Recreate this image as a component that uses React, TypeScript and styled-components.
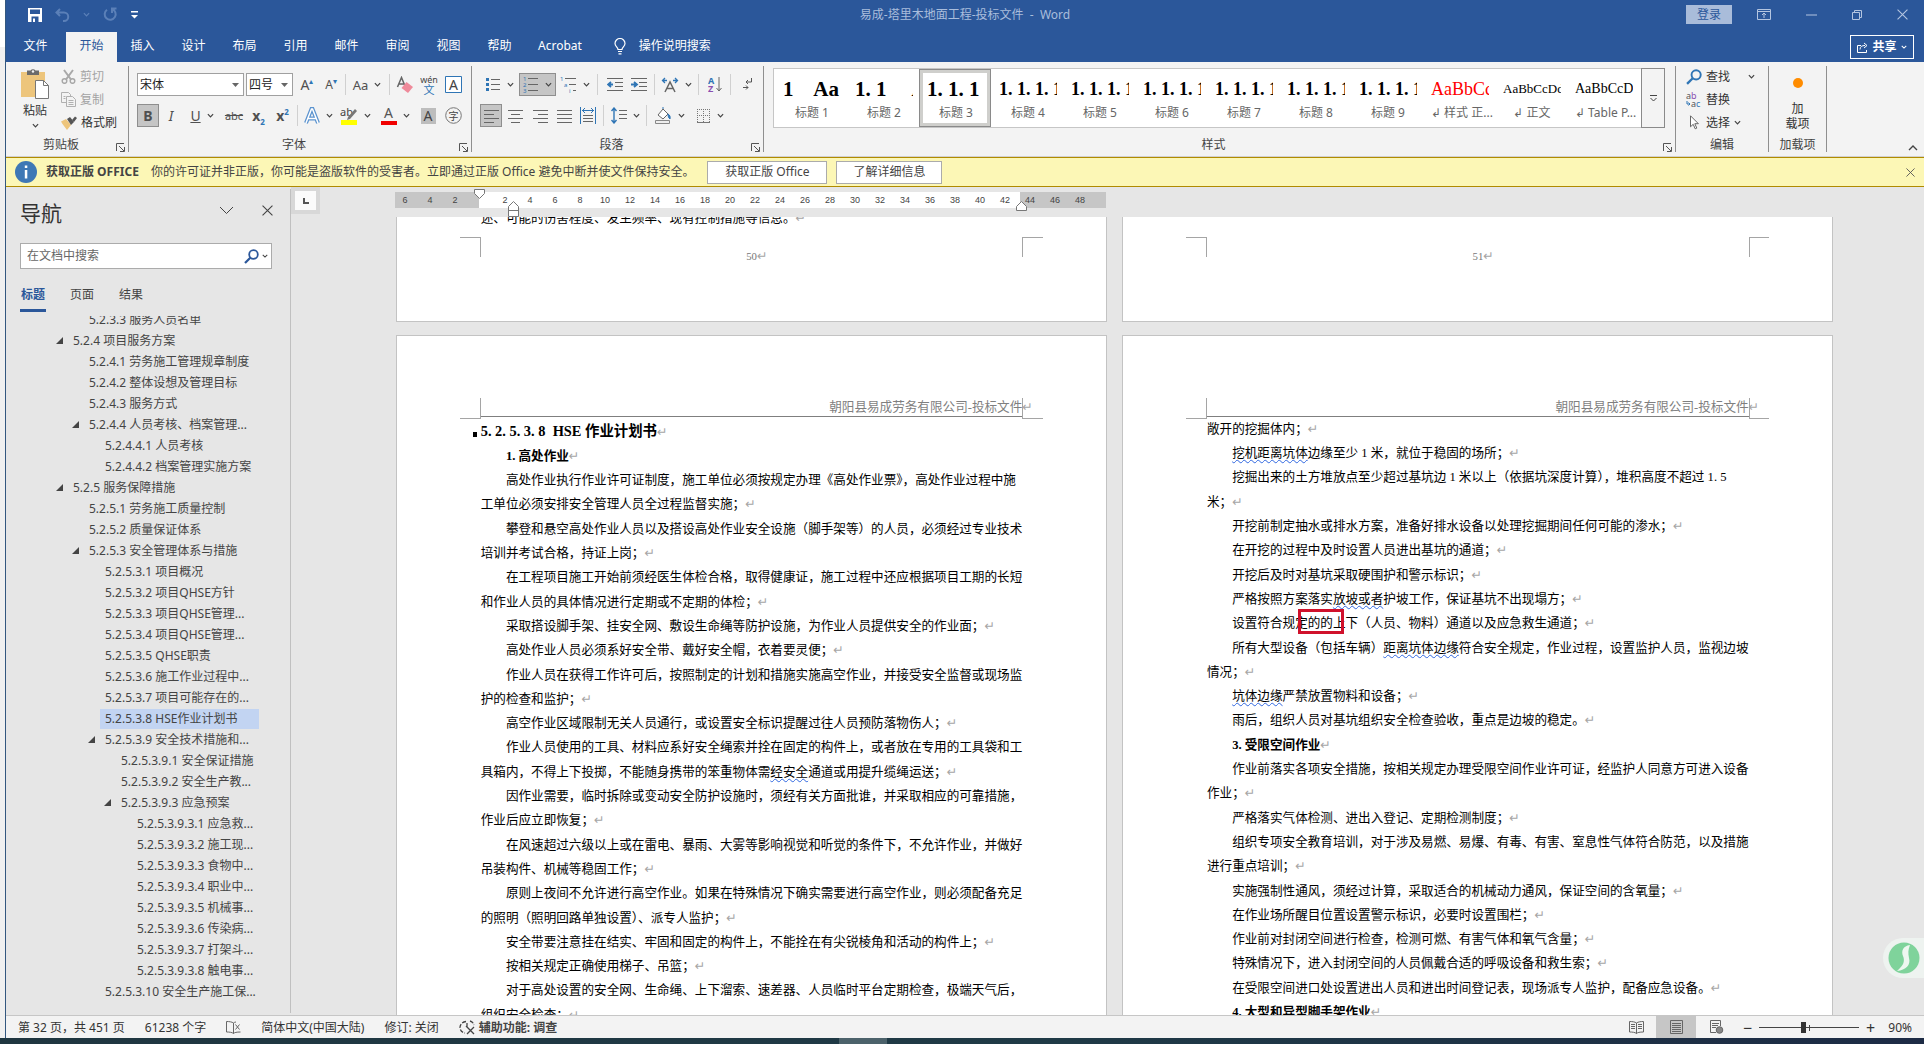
import React, { useState } from "react";
import styled, { createGlobalStyle, css } from "styled-components";

const ui = '"Noto Sans", "Noto Sans CJK SC", sans-serif';
const song = '"Liberation Serif", "Noto Sans CJK SC", serif';

const Global = createGlobalStyle`
  *, *::before, *::after { box-sizing: border-box; }
  body { margin: 0; font-family: ${ui}; font-size: 12px; line-height: 16px; color: #333; background: #f0f0f0; }
  button, input, select { font: inherit; color: inherit; margin: 0; padding: 0; border: 0; background: none; border-radius: 0; }
  button { cursor: pointer; }
  a { color: inherit; text-decoration: none; }
  svg { display: block; flex: none; }
  p, h1, h2, h3 { margin: 0; font: inherit; }
`;

/* ---------- shell ---------- */
const Shell = styled.div`
  height: 100vh;
  display: grid;
  grid-template-rows: minmax(0, 1fr) 6px;
  overflow: hidden;
`;
const Desktop = styled.div`
  display: grid;
  grid-template-columns: 5px minmax(0, 1fr);
  min-height: 0;
  background: linear-gradient(#fff 47px, #f0f0f0 47px);
`;
const Win = styled.div`
  grid-column: 2;
  display: flex;
  flex-direction: column;
  min-height: 0;
  border-left: 1px solid #33577f;
  background: #e6e6e6;
`;
const Taskbar = styled.div`
  display: flex;
  background: linear-gradient(to right, #1f3640, #1f3a46 55%, #1d2b45);
`;
const TaskItem = styled.div`
  width: 48px;
  margin-left: 839px;
  background: #4c626b;
`;

/* ---------- title ---------- */
const Blue = styled.header`
  background: #2b579a;
  color: #fff;
`;
const TitleBar = styled.div`
  display: grid;
  grid-template-columns: 1fr auto 1fr;
  align-items: center;
  height: 32px;
  padding-bottom: 3px;
`;
const Quick = styled.div`
  display: flex;
  align-items: center;
  padding-left: 22px;
  gap: 13px;
`;
const DocTitle = styled.h1`
  color: #a9bddc;
  white-space: pre;
`;
const WinTools = styled.div`
  display: flex;
  align-items: center;
  justify-content: flex-end;
  color: #b4c5e0;
  padding-right: 16px;
  gap: 35px;
`;
const Login = styled.button`
  height: 19px;
  width: 46px;
  margin-right: -10px;
  background: #a9bcda;
  color: #2b579a;
`;
const TabRow = styled.nav`
  display: flex;
  height: 30px;
  padding-left: 4px;
`;
const RibbonTab = styled.button<{ $on?: boolean }>`
  min-width: 51px;
  padding: 0 13px 2px;
  color: ${(p) => (p.$on ? "#2b579a" : "#fff")};
  background: ${(p) => (p.$on ? "#f3f3f3" : "transparent")};
  &:first-child { margin-right: 5px; }
`;
const Tell = styled.button`
  display: flex;
  align-items: center;
  gap: 13px;
  padding: 0 19px 2px;
`;
const Share = styled.button`
  display: flex;
  align-items: center;
  justify-content: center;
  gap: 4px;
  width: 64px;
  height: 24px;
  margin: 3px 10px 0 auto;
  border: 1px solid #fff;
  font-weight: 700;
`;

/* ---------- ribbon ---------- */
const Ribbon = styled.div`
  display: flex;
  height: 95px;
  padding: 4px 0;
  background: #f3f3f3;
  border-bottom: 1px solid #d2d0ce;
  color: #333;
`;
const Group = styled.section<{ $w?: number }>`
  display: flex;
  flex-direction: column;
  ${(p) => (p.$w ? css`flex: none; width: ${p.$w}px;` : css`flex: 1; min-width: 0;`)}
  border-right: 1px solid #8f8f8f;
`;
const Tools = styled.div`
  display: flex;
  flex-direction: column;
  gap: 8px;
  padding: 7px 0 0 8px;
`;
const ToolRow = styled.div`
  display: flex;
  align-items: center;
  height: 23px;
`;
const Foot = styled.div`
  display: flex;
  align-items: flex-end;
  margin-top: auto;
  line-height: 14px;
  white-space: nowrap;
  color: #444;
  span { flex: 1; text-align: center; }
  svg { margin-right: 3px; }
`;
const Tool = styled.button<{ $w: number; $on?: boolean }>`
  display: flex;
  align-items: center;
  justify-content: center;
  gap: 6px;
  flex: none;
  width: ${(p) => p.$w}px;
  height: 23px;
  color: #555;
  ${(p) => p.$on && css`background: #c5c5c5; box-shadow: inset 0 0 0 1px #8e8e8e;`}
`;
const Sep = styled.span<{ $w: number }>`
  flex: none;
  width: 1px;
  height: 21px;
  margin: 0 ${(p) => Math.floor(p.$w / 2)}px;
  background: #d0d0d0;
`;
const Field = styled.label<{ $w: number }>`
  display: flex;
  align-items: center;
  width: ${(p) => p.$w}px;
  height: 23px;
  margin-right: 2px;
  padding-right: 4px;
  border: 1px solid #a0a0a0;
  background: #fff;
  select { appearance: none; flex: 1; min-width: 0; padding-left: 2px; color: #222; outline: 0; }
`;
const Glyph = styled.span<{ $size?: number; $bold?: boolean; $italic?: boolean; $line?: string; $color?: string }>`
  font-size: ${(p) => p.$size ?? 14}px;
  font-weight: ${(p) => (p.$bold ? 700 : 400)};
  font-style: ${(p) => (p.$italic ? "italic" : "normal")};
  text-decoration: ${(p) => p.$line ?? "none"};
  color: ${(p) => p.$color ?? "#505050"};
  sup, sub { font-size: 8px; line-height: 0; color: #2f75b5; }
`;
const Bar = styled.span<{ $c: string }>`
  display: block;
  width: 16px;
  height: 19px;
  line-height: 14px;
  font-size: 14px;
  border-bottom: 4px solid ${(p) => p.$c};
`;
const Shaded = styled.span`
  width: 15px;
  background: #bdbdbd;
  color: #444;
  font-size: 14px;
`;
const Clip = styled.div`
  display: grid;
  grid-template-columns: 44px 1fr;
  gap: 4px;
  padding: 0 0 0 7px;
`;
const Paste = styled.button`
  display: flex;
  flex-direction: column;
  align-items: center;
  padding-top: 2px;
  gap: 3px;
`;
const Stack = styled.div<{ $inset?: boolean }>`
  display: flex;
  flex-direction: column;
  padding-left: ${(p) => (p.$inset ? "10px" : 0)};
`;
const Cmd = styled.button<{ $off?: boolean }>`
  display: flex;
  align-items: center;
  gap: 4px;
  height: 23px;
  color: ${(p) => (p.$off ? "#a3a3a3" : "#333")};
  padding-bottom: 2px;
  white-space: nowrap;
`;
const Gallery = styled.div`
  display: flex;
  height: 60px;
  margin: 2px 10px 0 9px;
  border: 1px solid #c6c6c6;
  background: #fff;
`;
const Styles = styled.div`
  display: flex;
  flex: 1;
  min-width: 0;
  overflow: hidden;
  padding-left: 1px;
`;
const StyleCard = styled.button<{ $on?: boolean }>`
  display: flex;
  flex-direction: column;
  flex: none;
  width: 72px;
  height: 58px;
  padding: 7px 6px 0 8px;
  text-align: center;
  ${(p) => p.$on && css`box-shadow: inset 0 0 0 1px #8a8a8a, inset 0 0 0 4px #cfcfcc;`}
`;
const Sample = styled.span<{ $size: number; $bold?: boolean; $color?: string }>`
  width: 100%;
  height: 26px;
  overflow: hidden;
  white-space: pre;
  text-align: left;
  font-family: ${song};
  font-size: ${(p) => p.$size}px;
  line-height: 26px;
  font-weight: ${(p) => (p.$bold ? 700 : 400)};
  color: ${(p) => p.$color ?? "#000"};
`;
const StyleName = styled.span`
  width: 100%;
  color: #666;
  white-space: nowrap;
  line-height: 22px;
`;
const More = styled.button`
  display: grid;
  place-items: center;
  width: 24px;
  margin: -1px;
  border: 1px solid #8a8a8a;
  background: #f3f3f3;
`;
const AddIn = styled.button`
  display: flex;
  flex-direction: column;
  align-items: center;
  padding-top: 11px;
  line-height: 15px;
  svg { margin-bottom: 12px; }
`;
const Tail = styled.div`
  display: flex;
  align-items: flex-end;
  justify-content: flex-end;
  width: 97px;
  padding: 0 6px 0 0;
`;

/* ---------- licence notice ---------- */
const Notice = styled.div`
  display: flex;
  align-items: center;
  height: 30px;
  padding: 0 9px;
  background: #fcf7b6;
  border: solid #b08b00;
  border-width: 1px 0;
  color: #444;
  strong { margin: 0 12px 0 9px; }
`;
const NoticeButton = styled.button<{ $w: number }>`
  width: ${(p) => p.$w}px;
  height: 23px;
  margin-left: 9px;
  border: 1px solid #ababab;
  background: #fff;
  span + & { margin-left: 13px; }
`;
const Spacer = styled.span`
  flex: 1;
`;

/* ---------- body ---------- */
const Body = styled.div`
  position: relative;
  display: grid;
  grid-template-columns: 285px minmax(0, 1fr);
  flex: 1;
  min-height: 0;
`;
const Pane = styled.aside`
  display: flex;
  flex-direction: column;
  min-height: 0;
  padding: 8px 0 0 14px;
  margin: 2px 0;
  border-right: 1px solid #c0c0c0;
`;
const PaneHead = styled.div`
  display: flex;
  align-items: center;
  height: 30px;
  padding: 0 17px 4px 0;
  gap: 28px;
  h2 { flex: 1; font-size: 21px; line-height: 30px; color: #333; padding-top: 6px; }
`;
const Search = styled.form`
  display: flex;
  align-items: center;
  width: 252px;
  height: 26px;
  margin-top: 16px;
  padding: 0 3px 0 6px;
  gap: 3px;
  border: 1px solid #ababab;
  background: #fff;
  input { flex: 1; min-width: 0; outline: 0; }
  input::placeholder { color: #666; opacity: 1; }
`;
const PaneTabs = styled.div`
  display: flex;
  gap: 23px;
  margin-top: 13px;
`;
const PaneTab = styled.button<{ $on?: boolean }>`
  width: 26px;
  height: 30px;
  padding-bottom: 2px;
  color: ${(p) => (p.$on ? "#2b579a" : "#444")};
  font-weight: ${(p) => (p.$on ? 700 : 400)};
  border-bottom: 3px solid ${(p) => (p.$on ? "#2b579a" : "transparent")};
  white-space: nowrap;
`;
const Outline = styled.ul`
  flex: 1;
  min-height: 0;
  overflow: hidden;
  list-style: none;
  margin: 4px 0 0;
  padding: 0;
  li:first-child { margin-top: -7px; }
`;
const Entry = styled.li<{ $depth: number }>`
  display: flex;
  align-items: center;
  height: 21px;
  padding-left: ${(p) => 31 + p.$depth * 16}px;
`;
const Arrow = styled.span`
  display: grid;
  place-items: center;
  width: 17px;
  flex: none;
`;
const EntryLink = styled.a<{ $on?: boolean }>`
  white-space: nowrap;
  line-height: 20px;
  padding: 0 5px;
  width: ${(p) => (p.$on ? "159px" : "auto")};
  color: #444;
  background: ${(p) => (p.$on ? "#c2d4f2" : "none")};
`;
const Work = styled.main`
  display: flex;
  flex-direction: column;
  min-width: 0;
  min-height: 0;
  overflow: hidden;
`;
const RulerRow = styled.div`
  display: flex;
  height: 30px;
  flex: none;
`;
const TabStop = styled.button`
  display: grid;
  place-items: center;
  width: 29px;
  height: 27px;
  border: 4px solid #d8d8d8;
  background: #fbfbfb;
`;
const Ruler = styled.div`
  position: relative;
  display: grid;
  grid-template-columns: repeat(28, 25px);
  align-items: center;
  width: 711px;
  height: 16px;
  margin: 5px 0 0 75px;
  background: linear-gradient(to right, #c6c6c6 84px, #fff 84px, #fff 625px, #c6c6c6 625px);
  font: 9px/16px "Liberation Sans", sans-serif;
  color: #444;
  text-align: center;
  span { width: 20px; }
`;
const Marker = styled.svg<{ $x: number; $y: number }>`
  position: absolute;
  left: ${(p) => p.$x}px;
  top: ${(p) => p.$y}px;
`;
const Scroll = styled.div`
  flex: 1;
  min-height: 0;
  overflow: hidden;
  padding-left: 105px;
`;
const Sheets = styled.div`
  display: grid;
  grid-template-columns: 790px 790px;
  column-gap: 17px;
  row-gap: 14px;
`;
const Sheet = styled.article<{ $tail?: boolean }>`
  height: ${(p) => (p.$tail ? "117px" : "1117px")};
  background: #fff;
  border: 1px solid #c3c3c3;
  border-top-width: ${(p) => (p.$tail ? 0 : "1px")};
  overflow: hidden;
  font-family: ${song};
  font-size: 14px;
  color: #000;
`;
const LastLine = styled.p`
  height: 27px;
  line-height: 27px;
  margin: -12px 0 7px 93px;
`;
const MarginRow = styled.div<{ $head?: boolean }>`
  display: flex;
  height: 23px;
  margin-top: ${(p) => (p.$head ? "69px" : 0)};
  padding: 0 70px;
`;
const Corner = styled.i<{ $edge: "tl" | "tr" | "bl" | "br" }>`
  width: 23px;
  height: 23px;
  flex: none;
  border: 0 solid #a5a5a5;
  border-${(p) => (p.$edge[0] === "t" ? "top" : "bottom")}-width: 1px;
  border-${(p) => (p.$edge[1] === "l" ? "right" : "left")}-width: 1px;
`;
const PageNumber = styled.span`
  flex: 1;
  padding: 14px 0 0 12px;
  text-align: center;
  font-size: 12px;
  line-height: 16px;
  color: #777;
`;
const HeadText = styled.span`
  flex: 1;
  height: 21px;
  line-height: 20px;
  text-align: right;
  color: #7f7f7f;
  border-bottom: 1px solid #7f7f7f;
  white-space: nowrap;
`;
const HeadMark = styled.span`
  display: inline-block;
  width: 0;
`;
const Flow = styled.div<{ $up?: boolean }>`
  width: 604px;
  margin-left: 93px;
  margin-top: ${(p) => (p.$up ? "-2px" : 0)};
  line-height: 27px;
`;
const Title3 = styled.h3`
  position: relative;
  height: 28px;
  font-size: 16px;
  font-weight: 700;
  white-space: pre;
  &::before {
    content: "";
    position: absolute;
    left: -9px;
    top: 15px;
    width: 5px;
    height: 5px;
    background: #000;
  }
`;
const Para = styled.p<{ $bold?: boolean; $flat?: boolean }>`
  text-indent: ${(p) => (p.$flat ? 0 : "2em")};
  font-weight: ${(p) => (p.$bold ? 700 : 400)};
`;
const MarkText = styled.span`
  font: 400 14px/0 "DejaVu Sans", sans-serif;
  color: #a6a6a6;
  text-indent: 0;
`;
const Wavy = styled.span`
  text-decoration: underline wavy #2f67e0 1px;
  text-underline-offset: 2px;
`;
const Boxed = styled.span`
  position: relative;
  text-indent: 0;
  &::after {
    content: "";
    position: absolute;
    inset: -8px 2px -4px 3px;
    border: 4px solid #d0112b;
  }
`;
const Float = styled.button`
  position: absolute;
  right: 0;
  bottom: 37px;
  display: grid;
  place-items: center;
  width: 41px;
  height: 40px;
  border-radius: 20px 0 0 20px;
  background: #eef3f0;
`;

/* ---------- status ---------- */
const Status = styled.footer`
  display: flex;
  align-items: center;
  height: 23px;
  flex: none;
  padding: 1px 12px 0;
  border-top: 1px solid #c6c6c6;
  background: #f3f3f3;
  color: #333;
  gap: 20px;
  white-space: nowrap;
`;
const Access = styled.button`
  display: flex;
  align-items: center;
  gap: 3px;
  font-weight: 700;
  color: #444;
`;
const Views = styled.div`
  display: flex;
  align-self: stretch;
  margin: -1px 0 0 auto;
`;
const View = styled.button<{ $on?: boolean }>`
  display: grid;
  place-items: center;
  width: 40px;
  background: ${(p) => (p.$on ? "#c6c6c6" : "none")};
`;
const ZoomBox = styled.div`
  display: flex;
  align-items: center;
  gap: 4px;
  margin-left: -16px;
  span { width: 30px; text-align: right; }
`;
const Step = styled.button`
  width: 15px;
  font-size: 16px;
`;
const Track = styled.input`
  appearance: none;
  width: 100px;
  height: 12px;
  background: linear-gradient(#444, #444) center / 100% 1px no-repeat, linear-gradient(#444, #444) center / 1px 6px no-repeat;
  &::-webkit-slider-thumb {
    appearance: none;
    width: 5px;
    height: 11px;
    background: #333;
  }
`;

/* ---------- drawings ---------- */
const Chev = ({ c = "#444", w = 7 }: { c?: string; w?: number }) => (
  <svg width={w} height={w} viewBox="0 0 8 8" fill="none" stroke={c} strokeWidth="1.4"><path d="M1 2.5 4 5.5 7 2.5" /></svg>
);
const Tri = () => <svg width="7" height="4" viewBox="0 0 7 4"><path d="M0 0h7L3.500 4z" fill="#666" /></svg>;
const Cross = ({ s = 10, c = "currentColor" }: { s?: number; c?: string }) => (
  <svg width={s} height={s} viewBox="0 0 10 10" stroke={c} strokeWidth="1"><path d="M.5.5l9 9M9.500.5l-9 9" /></svg>
);
const Launcher = () => (
  <svg width="9" height="9" viewBox="0 0 9 9" fill="none" stroke="#555"><path d="M.5 8V.5H8M3 3l5 5M8.500 4v4.500H4" /></svg>
);
const Magnifier = ({ c = "#2b579a", s = 15 }: { c?: string; s?: number }) => (
  <svg width={s} height={s} viewBox="0 0 15 15" fill="none" stroke={c}><circle cx="9.500" cy="5.500" r="4.300" strokeWidth="1.800" /><path d="M6.300 8.700 1 14" strokeWidth="2.200" /></svg>
);
const Lines = ({ d, w = 15 }: { d: string; w?: number }) => (
  <svg width={w} height="14" viewBox={`0 0 ${w} 14`} stroke="#666" fill="none"><path d={d} /></svg>
);
const Save = () => (
  <svg width="14" height="14" viewBox="0 0 14 14"><path d="M0 0h14v14H0z" fill="#fff" /><path d="M2 1.500h10v4.500H2zM3.500 8.500h7V14h-7z" fill="#2b579a" /><path d="M5 10.500h2V14H5z" fill="#fff" /></svg>
);
const Undo = () => (
  <svg width="15" height="14" viewBox="0 0 15 14" fill="none" stroke="#5b80b8" strokeWidth="2"><path d="M5 1 1.500 4.500 5 8M2 4.500h7a4 4 0 0 1 0 8.500H8" /></svg>
);
const Redo = () => (
  <svg width="15" height="15" viewBox="0 0 15 15" fill="none" stroke="#5b80b8" strokeWidth="2"><path d="M9 2a5.500 5.500 0 1 1-5 .7M9 6V1.500h4.500" /></svg>
);
const Bulb = () => (
  <svg width="12" height="17" viewBox="0 0 12 17" fill="none" stroke="#fff" strokeWidth="1.200"><path d="M4 11.500C4 9 1 8.500 1 5.500a5 5 0 0 1 10 0c0 3-3 3.500-3 6zM4 13.500h4M4.500 15.800h3" /></svg>
);
const PasteIcon = () => (
  <svg width="30" height="32" viewBox="0 0 30 32"><path d="M1 4h24v25H1z" fill="#edc57c" /><path d="M7 2.500h3.500a3 3 0 0 1 5 0H19V7H7z" fill="#6b6b6b" /><circle cx="13" cy="3.500" r="1.200" fill="#f3f3f3" /><path d="M15.500 12.500h8l5 5v13h-13z" fill="#fff" stroke="#777" /><path d="M23.500 12.500v5h5" fill="none" stroke="#777" /></svg>
);
const Scissors = () => (
  <svg width="15" height="15" viewBox="0 0 15 15" fill="none" stroke="#a8a8a8" strokeWidth="1.500"><path d="M3 1l7 9.500M12 1 5 10.500" strokeWidth="2" /><circle cx="3.500" cy="12" r="2.300" /><circle cx="11.500" cy="12" r="2.300" /></svg>
);
const CopyIcon = () => (
  <svg width="15" height="15" viewBox="0 0 15 15" fill="#f3f3f3" stroke="#b0b0b0"><path d="M.5.5h7l2 2v8h-9z" /><path d="M5.500 4.500h6l3 3v7h-9zM7.500 8.500h5M7.500 10.500h5M7.500 12.500h5M2.500 4.500h2M2.500 6.500h2" /></svg>
);
const Brush = () => (
  <svg width="16" height="14" viewBox="0 0 16 14"><path d="M0 5.500 5 3l5 6-4 5C4 11 2 9 0 5.500z" fill="#edc57c" /><path d="M6 3l3-2 4 5-3 3z" fill="#555" /><path d="M11 4l3-3.500L16 2l-3 4z" fill="#555" /></svg>
);
const Eraser = () => (
  <svg width="18" height="18" viewBox="0 0 18 18"><path d="M1.500 11 5.500 1.500 9 10M3 8h5" fill="none" stroke="#666" strokeWidth="1.500" /><path d="M10.500 6 17 11l-5 6-6.500-5z" fill="#ef8a9a" /></svg>
);
const Wen = () => (
  <svg width="18" height="20" viewBox="0 0 18 20"><text x="9" y="8" textAnchor="middle" fontFamily="Noto Sans" fontSize="9" fill="#444">wén</text><text x="9" y="19" textAnchor="middle" fontFamily="Noto Sans CJK SC" fontSize="11" fill="#2f75b5">文</text></svg>
);
const LetterBox = () => (
  <svg width="17" height="17" viewBox="0 0 17 17"><path d="M.5.5h16v16H.5z" fill="#fff" stroke="#2f75b5" /><text x="8.500" y="14" textAnchor="middle" fontFamily="Noto Sans" fontSize="14" fill="#444">A</text></svg>
);
const RingChar = () => (
  <svg width="17" height="17" viewBox="0 0 17 17"><circle cx="8.500" cy="8.500" r="7.800" fill="none" stroke="#777" /><text x="8.500" y="12.500" textAnchor="middle" fontFamily="Noto Sans CJK SC" fontSize="10" fill="#444">字</text></svg>
);
const Outlined = () => (
  <svg width="16" height="18" viewBox="0 0 16 18"><path d="M2 16 7.500 2h1L14 16M4 11.500h8" fill="none" stroke="#5b93cf" strokeWidth="4" /><path d="M2 16 7.500 2h1L14 16M4 11.500h8" fill="none" stroke="#fff" strokeWidth="1.500" /></svg>
);
const Highlighter = () => (
  <svg width="18" height="19" viewBox="0 0 18 19"><text x="0" y="10" fontFamily="Noto Sans" fontSize="11" fill="#444">ab</text><path d="M15 3l2 2-7 8-3 1 1-3z" fill="#777" /><path d="M1 14h16v5H1z" fill="#ff0" /></svg>
);
const BulletsIcon = () => (
  <svg width="15" height="15" viewBox="0 0 15 15"><path d="M0 1h3v3H0zM0 6h3v3H0zM0 11h3v3H0z" fill="#2f75b5" /><path d="M5 2.500h9M5 7.500h9M5 12.500h9" stroke="#666" /></svg>
);
const NumberIcon = () => (
  <svg width="16" height="17" viewBox="0 0 16 17"><g fontFamily="Noto Sans" fontSize="6" fill="#2f75b5"><text x="0" y="5">1</text><text x="0" y="11">2</text><text x="0" y="17">3</text></g><path d="M5 2.500h10M5 8.500h10M5 14.500h10" stroke="#666" /></svg>
);
const MultiIcon = () => (
  <svg width="17" height="17" viewBox="0 0 17 17"><g fontFamily="Noto Sans" fontSize="6" fill="#2f75b5"><text x="0" y="5">1</text><text x="4" y="11">a</text><text x="9" y="17">i</text></g><path d="M5 2.500h11M9 8.500h7M13 14.500h3" stroke="#666" /></svg>
);
const Indent = ({ right }: { right?: boolean }) => (
  <svg width="16" height="14" viewBox="0 0 16 14"><path d="M0 .5h16M8 4.500h8M8 8.500h8M0 12.500h16" stroke="#666" /><path d={right ? "M0 6.500h5M3 4l3 2.500L3 9" : "M1 6.500h5M4 4 1 6.500 4 9"} stroke="#2f75b5" strokeWidth="1.800" fill="none" /></svg>
);
const Asian = () => (
  <svg width="18" height="16" viewBox="0 0 18 16" fill="none"><path d="M4 15 9 5l5 10M6 11.500h6" stroke="#666" strokeWidth="1.500" /><path d="M4 1 1.500 3.500 4 6M1.500 3.500H6M14 1l2.500 2.500L14 6M16.500 3.500H12" stroke="#2f75b5" strokeWidth="1.300" /></svg>
);
const Sort = () => (
  <svg width="14" height="17" viewBox="0 0 14 17"><text x="0" y="8" fontFamily="Noto Sans" fontSize="9" fontWeight="700" fill="#2f75b5">A</text><text x="0" y="16" fontFamily="Noto Sans" fontSize="9" fontWeight="700" fill="#8a4fb0">Z</text><path d="M11 1v14M8.500 12l2.500 3 2.500-3" fill="none" stroke="#666" /></svg>
);
const MarkIcon = () => (
  <svg width="11" height="13" viewBox="0 0 11 13" fill="none" stroke="#555"><path d="M9.500 0v4H4M6 2 4 4l2 2M1 9.500h5M4 7.500l2 2-2 2" /></svg>
);
const Distribute = () => (
  <svg width="16" height="17" viewBox="0 0 16 17"><path d="M.5 0v17M15.500 0v17M2 3.500h12M5 1 2.500 3.500 5 6M11 1l2.500 2.500L11 6" stroke="#2f75b5" fill="none" /><path d="M3 8.500h10M3 11.500h10M3 14.500h10" stroke="#666" /></svg>
);
const Spacing = () => (
  <svg width="16" height="17" viewBox="0 0 16 17"><path d="M3 1v15M.5 4 3 1l2.500 3M.5 13 3 16l2.500-3" stroke="#2f75b5" strokeWidth="1.400" fill="none" /><path d="M8 3.500h8M8 7.500h8M8 11.500h8" stroke="#666" /></svg>
);
const Bucket = () => (
  <svg width="17" height="17" viewBox="0 0 17 17"><path d="M3 8l5-6 5 5-5 5z" fill="#fff" stroke="#666" /><path d="M8 2V0M13 7c2 1 2.500 3 2 5-1.500-1-2-3-2-5z" stroke="#2f75b5" fill="#2f75b5" /><path d="M.5 13.500h14v3H.5z" fill="#eee" stroke="#888" /></svg>
);
const Borders = () => (
  <svg width="14" height="14" viewBox="0 0 14 14" fill="none" stroke="#777"><path d="M.5 0v13M6.500 0v13M12.500 0v13M0 .5h13M0 6.500h13" strokeDasharray="1 1" /><path d="M0 13.500h13" /></svg>
);
const Replace = () => (
  <svg width="16" height="16" viewBox="0 0 16 16"><g fontFamily="Noto Sans" fontSize="9"><text x="0" y="7" fill="#555">a<tspan fill="#8a4fb0">b</tspan></text><text x="5" y="15" fill="#555">a<tspan fill="#2f75b5">c</tspan></text></g><path d="M1 9v3h3M2.500 10.500 4 12l-1.500 1.500" stroke="#2f75b5" fill="none" /></svg>
);
const Pointer = () => (
  <svg width="16" height="15" viewBox="-4 0 16 15"><path d="M.5.8v11l2.700-2.500 2 4.500 1.600-.7-2-4.400h3.600z" fill="#fff" stroke="#666" /></svg>
);
const Book = ({ c = "#666", x }: { c?: string; x?: boolean }) => (
  <svg width="15" height="13" viewBox="0 0 15 13" fill="none" stroke={c}><path d="M7.500 2v10.500M7.500 2C6 .8 3 .5.5.5v10.500c3 0 5.500.3 7 1.500 1-1 3-1.500 7-1.500" /><path d={x ? "M7.500 2C8 1.500 9 1 10 1M9.500 3.500l4 5M13.500 3.500l-4 5" : "M7.500 2C9 .8 12 .5 14.500.5V11M2 3.500h4M2 5.500h4M2 7.500h4M9 3.500h4M9 5.500h4M9 7.500h4"} /></svg>
);
const PageIcon = ({ web }: { web?: boolean }) => (
  <svg width="15" height="14" viewBox="0 0 15 14" fill="none" stroke="#666"><path d={web ? "M7 12.500H1.500v-12h10V6M3 3.500h7M3 5.500h6M3 7.500h4" : "M1.500.5h12v13h-12zM3 3.500h9M3 5.500h9M3 7.500h9M3 9.500h9M3 11.500h9"} />{web && <circle cx="10.500" cy="10" r="3.300" fill="#888" />}</svg>
);

const Mark = () => <MarkText>↵</MarkText>;

/* ---------- data ---------- */
const tabs = ["文件", "开始", "插入", "设计", "布局", "引用", "邮件", "审阅", "视图", "帮助", "Acrobat"];

const styleCards: [string, string, number, boolean?, string?][] = [
  ["1    Aa", "标题 1", 21, true],
  ["1. 1     Aa", "标题 2", 21, true],
  ["1. 1. 1", "标题 3", 21, true],
  ["1. 1. 1. 1", "标题 4", 18, true],
  ["1. 1. 1. 1. 1", "标题 5", 18, true],
  ["1. 1. 1. 1. 1", "标题 6", 18, true],
  ["1. 1. 1. 1. 1", "标题 7", 18, true],
  ["1. 1. 1. 1. 1", "标题 8", 18, true],
  ["1. 1. 1. 1. 1", "标题 9", 18, true],
  ["AaBbCcDd", "↲ 样式 正...", 18, false, "#f00"],
  ["AaBbCcDdEe", "↲ 正文", 13],
  ["AaBbCcDdEe", "↲ Table P...", 14],
];

const outline: [number, string, boolean?][] = [
  [1, "5.2.3.3 服务人员名单"],
  [0, "5.2.4 项目服务方案", true],
  [1, "5.2.4.1 劳务施工管理规章制度"],
  [1, "5.2.4.2 整体设想及管理目标"],
  [1, "5.2.4.3 服务方式"],
  [1, "5.2.4.4 人员考核、档案管理...", true],
  [2, "5.2.4.4.1 人员考核"],
  [2, "5.2.4.4.2 档案管理实施方案"],
  [0, "5.2.5 服务保障措施", true],
  [1, "5.2.5.1 劳务施工质量控制"],
  [1, "5.2.5.2 质量保证体系"],
  [1, "5.2.5.3 安全管理体系与措施", true],
  [2, "5.2.5.3.1 项目概况"],
  [2, "5.2.5.3.2 项目QHSE方针"],
  [2, "5.2.5.3.3 项目QHSE管理..."],
  [2, "5.2.5.3.4 项目QHSE管理..."],
  [2, "5.2.5.3.5 QHSE职责"],
  [2, "5.2.5.3.6 施工作业过程中..."],
  [2, "5.2.5.3.7 项目可能存在的..."],
  [2, "5.2.5.3.8 HSE作业计划书"],
  [2, "5.2.5.3.9 安全技术措施和...", true],
  [3, "5.2.5.3.9.1 安全保证措施"],
  [3, "5.2.5.3.9.2 安全生产教..."],
  [3, "5.2.5.3.9.3 应急预案", true],
  [4, "5.2.5.3.9.3.1 应急救..."],
  [4, "5.2.5.3.9.3.2 施工现..."],
  [4, "5.2.5.3.9.3.3 食物中..."],
  [4, "5.2.5.3.9.3.4 职业中..."],
  [4, "5.2.5.3.9.3.5 机械事..."],
  [4, "5.2.5.3.9.3.6 传染病..."],
  [4, "5.2.5.3.9.3.7 打架斗..."],
  [4, "5.2.5.3.9.3.8 触电事..."],
  [2, "5.2.5.3.10 安全生产施工保..."],
];
const currentEntry = 19;

// "#" starts a bold line, "^" a line without indent; ~…~ is flagged by the proofing tool, […] is framed.
const leftPage = [
  "#1. 高处作业",
  "高处作业执行作业许可证制度，施工单位必须按规定办理《高处作业票》，高处作业过程中施工单位必须安排安全管理人员全过程监督实施；",
  "攀登和悬空高处作业人员以及搭设高处作业安全设施（脚手架等）的人员，必须经过专业技术培训并考试合格，持证上岗；",
  "在工程项目施工开始前须经医生体检合格，取得健康证，施工过程中还应根据项目工期的长短和作业人员的具体情况进行定期或不定期的体检；",
  "采取搭设脚手架、挂安全网、敷设生命绳等防护设施，为作业人员提供安全的作业面；",
  "高处作业人员必须系好安全带、戴好安全帽，衣着要灵便；",
  "作业人员在获得工作许可后，按照制定的计划和措施实施高空作业，并接受安全监督或现场监护的检查和监护；",
  "高空作业区域限制无关人员通行，或设置安全标识提醒过往人员预防落物伤人；",
  "作业人员使用的工具、材料应系好安全绳索并拴在固定的构件上，或者放在专用的工具袋和工具箱内，不得上下投掷，不能随身携带的笨重物体需~经安全~通道或用提升缆绳运送；",
  "因作业需要，临时拆除或变动安全防护设施时，须经有关方面批谁，并采取相应的可靠措施，作业后应立即恢复；",
  "在风速超过六级以上或在雷电、暴雨、大雾等影响视觉和听觉的条件下，不允许作业，并做好吊装构件、机械等稳固工作；",
  "原则上夜间不允许进行高空作业。如果在特殊情况下确实需要进行高空作业，则必须配备充足的照明（照明回路单独设置）、派专人监护；",
  "安全带要注意挂在结实、牢固和固定的构件上，不能拴在有尖锐棱角和活动的构件上；",
  "按相关规定正确使用梯子、吊篮；",
  "对于高处设置的安全网、生命绳、上下溜索、速差器、人员临时平台定期检查，极端天气后，组织安全检查；",
];
const rightPage = [
  "^敞开的挖掘体内；",
  "~挖机距离坑体~边缘至少 1 米，就位于稳固的场所；",
  "挖掘出来的土方堆放点至少超过基坑边 1 米以上（依据坑深度计算），堆积高度不超过 1. 5 米；",
  "开挖前制定抽水或排水方案，准备好排水设备以处理挖掘期间任何可能的渗水；",
  "在开挖的过程中及时设置人员进出基坑的通道；",
  "开挖后及时对基坑采取硬围护和警示标识；",
  "严格按照方案落实~放坡或者~护坡工作，保证基坑不出现塌方；",
  "设置符合规[定的的上]下（人员、物料）通道以及应急救生通道；",
  "所有大型设备（包括车辆）~距离坑体边缘~符合安全规定，作业过程，设置监护人员，监视边坡情况；",
  "~坑体边缘~严禁放置物料和设备；",
  "雨后，组织人员对基坑组织安全检查验收，重点是边坡的稳定。",
  "#3. 受限空间作业",
  "作业前落实各项安全措施，按相关规定办理受限空间作业许可证，经监护人同意方可进入设备作业；",
  "严格落实气体检测、进出入登记、定期检测制度；",
  "组织专项安全教育培训，对于涉及易燃、易爆、有毒、有害、窒息性气体符合防范，以及措施进行重点培训；",
  "实施强制性通风，须经过计算，采取适合的机械动力通风，保证空间的含氧量；",
  "在作业场所醒目位置设置警示标识，必要时设置围栏；",
  "作业前对封闭空间进行检查，检测可燃、有害气体和氧气含量；",
  "特殊情况下，进入封闭空间的人员佩戴合适的呼吸设备和救生索；",
  "在受限空间进口处设置进出人员和进出时间登记表，现场派专人监护，配备应急设备。",
  "#4. 大型和异型脚手架作业",
];

const Paragraph = ({ text }: { text: string }) => {
  const bold = text[0] === "#";
  const flat = text[0] === "^";
  const parts = (bold || flat ? text.slice(1) : text).split(/(~[^~]+~|\[[^\]]+\])/);
  return (
    <Para $bold={bold} $flat={flat}>
      {parts.map((s, i) =>
        s[0] === "~" ? <Wavy key={i}>{s.slice(1, -1)}</Wavy> : s[0] === "[" ? <Boxed key={i}>{s.slice(1, -1)}</Boxed> : s
      )}
      <Mark />
    </Para>
  );
};

const PageHeader = () => (
  <MarginRow $head>
    <Corner $edge="bl" />
    <HeadText>朝阳县易成劳务有限公司-投标文件<HeadMark><Mark /></HeadMark></HeadText>
    <Corner $edge="br" />
  </MarginRow>
);
const PageFooter = ({ n }: { n: number }) => (
  <MarginRow>
    <Corner $edge="tl" />
    <PageNumber>{n}<Mark /></PageNumber>
    <Corner $edge="tr" />
  </MarginRow>
);

const GroupFoot = ({ name, launch = true }: { name: string; launch?: boolean }) => (
  <Foot><span>{name}</span>{launch && <Launcher />}</Foot>
);

export default function App() {
  const [zoom, setZoom] = useState(90);
  const ruler = Array.from({ length: 28 }, (_, i) => Math.abs(i * 2 - 6));
  return (
    <>
      <Global />
      <Shell>
        <Desktop>
          <Win>
            <Blue>
              <TitleBar>
                <Quick>
                  <button aria-label="保存"><Save /></button>
                  <button aria-label="撤消"><Undo /></button>
                  <Chev c="#5b80b8" />
                  <button aria-label="重复"><Redo /></button>
                  <svg width="7" height="8" viewBox="0 0 7 8"><path d="M0 0h7v1.500H0zM0 4h7L3.500 7.500z" fill="#fff" /></svg>
                </Quick>
                <DocTitle>易成-塔里木地面工程-投标文件  -  Word</DocTitle>
                <WinTools>
                  <Login>登录</Login>
                  <svg width="14" height="11" viewBox="0 0 14 11" fill="none" stroke="currentColor"><path d="M.5.5h13v10H.5zM1 2.500h12M7 9V4M5 6l2-2 2 2" /></svg>
                  <svg width="11" height="10" viewBox="0 0 11 10" stroke="currentColor"><path d="M0 5h11" /></svg>
                  <svg width="10" height="10" viewBox="0 0 10 10" fill="none" stroke="currentColor"><path d="M.5 2.500h7v7h-7zM2.500 2.500v-2h7v7h-2" /></svg>
                  <Cross s={11} />
                </WinTools>
              </TitleBar>
              <TabRow>
                {tabs.map((t) => <RibbonTab key={t} $on={t === "开始"}>{t}</RibbonTab>)}
                <Tell><Bulb />操作说明搜索</Tell>
                <Share>
                  <svg width="11" height="11" viewBox="0 0 11 11" fill="none" stroke="#fff"><path d="M4 3.500H.5v7h9V8M3 7.500c0-3 2-4 5-4M7 1l3 2.500L7 6" /></svg>
                  共享<Chev c="#fff" w={6} />
                </Share>
              </TabRow>
            </Blue>

            <Ribbon>
              <Group $w={123}>
                <Clip>
                  <Paste><PasteIcon /><span>粘贴</span><Chev /></Paste>
                  <Stack>
                    <Cmd $off><Scissors />剪切</Cmd>
                    <Cmd $off><CopyIcon />复制</Cmd>
                    <Cmd><Brush />格式刷</Cmd>
                  </Stack>
                </Clip>
                <GroupFoot name="剪贴板" />
              </Group>
              <Group $w={343}>
                <Tools>
                  <ToolRow>
                    <Field $w={107}><select aria-label="字体"><option>宋体</option></select><Tri /></Field>
                    <Field $w={47}><select aria-label="字号"><option>四号</option></select><Tri /></Field>
                    <Tool $w={24}><Glyph $size={14}>A<sup>▴</sup></Glyph></Tool>
                    <Tool $w={24}><Glyph $size={12}>A<sup>▾</sup></Glyph></Tool>
                    <Sep $w={4} />
                    <Tool $w={38}><Glyph $size={13}>Aa</Glyph><Chev /></Tool>
                    <Sep $w={7} />
                    <Tool $w={24} aria-label="清除格式"><Eraser /></Tool>
                    <Tool $w={24} aria-label="拼音指南"><Wen /></Tool>
                    <Tool $w={24} aria-label="字符边框"><LetterBox /></Tool>
                  </ToolRow>
                  <ToolRow>
                    <Tool $w={22} $on><Glyph $bold>B</Glyph></Tool>
                    <Tool $w={24}><Glyph $italic>I</Glyph></Tool>
                    <Tool $w={38}><Glyph $line="underline">U</Glyph><Chev /></Tool>
                    <Tool $w={26}><Glyph $size={11} $line="line-through">abc</Glyph></Tool>
                    <Tool $w={23}><Glyph $bold>x<sub>2</sub></Glyph></Tool>
                    <Tool $w={25}><Glyph $bold>x<sup>2</sup></Glyph></Tool>
                    <Sep $w={5} />
                    <Tool $w={36} aria-label="文本效果"><Outlined /><Chev /></Tool>
                    <Tool $w={39} aria-label="突出显示"><Highlighter /><Chev /></Tool>
                    <Tool $w={40}><Bar $c="#f00000">A</Bar><Chev /></Tool>
                    <Tool $w={26}><Shaded>A</Shaded></Tool>
                    <Tool $w={24} aria-label="带圈字符"><RingChar /></Tool>
                  </ToolRow>
                </Tools>
                <GroupFoot name="字体" />
              </Group>
              <Group $w={292}>
                <Tools>
                  <ToolRow>
                    <Tool $w={39} aria-label="项目符号"><BulletsIcon /><Chev /></Tool>
                    <Tool $w={37} $on aria-label="编号"><NumberIcon /><Chev /></Tool>
                    <Tool $w={37} aria-label="多级列表"><MultiIcon /><Chev /></Tool>
                    <Sep $w={9} />
                    <Tool $w={25} aria-label="减少缩进"><Indent /></Tool>
                    <Tool $w={24} aria-label="增加缩进"><Indent right /></Tool>
                    <Sep $w={7} />
                    <Tool $w={36} aria-label="中文版式"><Asian /><Chev /></Tool>
                    <Sep $w={9} />
                    <Tool $w={24} aria-label="排序"><Sort /></Tool>
                    <Sep $w={7} />
                    <Tool $w={26} aria-label="显示标记"><MarkIcon /></Tool>
                  </ToolRow>
                  <ToolRow>
                    <Tool $w={22} $on aria-label="左对齐"><Lines d="M0 1.500h15M0 5.500h10M0 9.500h15M0 13.500h10" /></Tool>
                    <Tool $w={26} aria-label="居中"><Lines d="M0 1.500h15M3 5.500h9M0 9.500h15M3 13.500h9" /></Tool>
                    <Tool $w={24} aria-label="右对齐"><Lines d="M0 1.500h15M5 5.500h10M0 9.500h15M5 13.500h10" /></Tool>
                    <Tool $w={24} aria-label="两端对齐"><Lines d="M0 1.500h15M0 5.500h15M0 9.500h15M0 13.500h15" /></Tool>
                    <Tool $w={24} aria-label="分散对齐"><Distribute /></Tool>
                    <Sep $w={7} />
                    <Tool $w={36} aria-label="行距"><Spacing /><Chev /></Tool>
                    <Sep $w={7} />
                    <Tool $w={40} aria-label="底纹"><Bucket /><Chev /></Tool>
                    <Tool $w={40} aria-label="边框"><Borders /><Chev /></Tool>
                  </ToolRow>
                </Tools>
                <GroupFoot name="段落" />
              </Group>
              <Group>
                <Gallery>
                  <Styles>
                    {styleCards.map(([s, n, size, bold, color]) => (
                      <StyleCard key={n} $on={n === "标题 3"}>
                        <Sample $size={size} $bold={bold} $color={color}>{s}</Sample>
                        <StyleName>{n}</StyleName>
                      </StyleCard>
                    ))}
                  </Styles>
                  <More aria-label="其他样式"><svg width="7" height="7" viewBox="0 0 7 7" fill="none" stroke="#444"><path d="M0 .5h7M.5 3l3 3 3-3" /></svg></More>
                </Gallery>
                <GroupFoot name="样式" />
              </Group>
              <Group $w={93}>
                <Stack $inset>
                  <Cmd><Magnifier s={16} c="#2f75b5" />查找<Spacer /><Chev /><Spacer /></Cmd>
                  <Cmd><Replace />替换</Cmd>
                  <Cmd><Pointer />选择<Chev /></Cmd>
                </Stack>
                <GroupFoot name="编辑" launch={false} />
              </Group>
              <Group $w={58}>
                <AddIn>
                  <svg width="12" height="12" viewBox="0 0 12 12"><circle cx="6" cy="6" r="5" fill="#ff8c00" /></svg>
                  <span>加</span><span>载项</span>
                </AddIn>
                <GroupFoot name="加载项" launch={false} />
              </Group>
              <Tail><svg width="10" height="8" viewBox="0 0 10 8" fill="none" stroke="#444" strokeWidth="1.400"><path d="M1 6l4-4 4 4" /></svg></Tail>
            </Ribbon>

            <Notice>
              <svg width="22" height="22" viewBox="0 0 22 22"><circle cx="11" cy="11" r="11" fill="#3f78b5" /><path d="M9.800 4.500h2.500V7H9.800zM9.800 9h2.500v8.500H9.800z" fill="#fff" /></svg>
              <strong>获取正版 OFFICE</strong>
              <span>你的许可证并非正版，你可能是盗版软件的受害者。立即通过正版 Office 避免中断并使文件保持安全。</span>
              <NoticeButton $w={120}>获取正版 Office</NoticeButton>
              <NoticeButton $w={106}>了解详细信息</NoticeButton>
              <Spacer />
              <button aria-label="关闭"><Cross s={9} c="#555" /></button>
            </Notice>

            <Body>
              <Pane>
                <PaneHead>
                  <h2>导航</h2>
                  <button aria-label="窗格选项"><svg width="15" height="9" viewBox="0 0 15 9" fill="none" stroke="#444"><path d="M1 1l6.500 6.500L14 1" /></svg></button>
                  <button aria-label="关闭窗格"><Cross s={11} c="#444" /></button>
                </PaneHead>
                <Search>
                  <input aria-label="在文档中搜索" placeholder="在文档中搜索" />
                  <Magnifier /><Chev w={6} />
                </Search>
                <PaneTabs>
                  <PaneTab $on>标题</PaneTab>
                  <PaneTab>页面</PaneTab>
                  <PaneTab>结果</PaneTab>
                </PaneTabs>
                <Outline>
                  {outline.map(([depth, text, open], i) => (
                    <Entry key={text} $depth={depth}>
                      <Arrow>{open && <svg width="7" height="7" viewBox="0 0 7 7"><path d="M7 0v7H0z" fill="#444" /></svg>}</Arrow>
                      <EntryLink href="#" $on={i === currentEntry}>{text}</EntryLink>
                    </Entry>
                  ))}
                </Outline>
              </Pane>
              <Work>
                <RulerRow>
                  <TabStop aria-label="制表符"><svg width="6" height="6" viewBox="0 0 6 6"><path d="M1 0v5h5" fill="none" stroke="#555" strokeWidth="2" /></svg></TabStop>
                  <Ruler>
                    {ruler.map((n, i) => <span key={i}>{n === 0 ? "" : n}</span>)}
                    <Marker $x={79} $y={-3} width="11" height="11" viewBox="0 0 11 11"><path d="M.5.5h10v4l-5 5-5-5z" fill="#fff" stroke="#777" /></Marker>
                    <Marker $x={113} $y={9} width="11" height="16" viewBox="0 0 11 16"><path d="M.5 15.500v-10l5-5 5 5v10zM.5 9.500h10" fill="#fff" stroke="#777" /></Marker>
                    <Marker $x={621} $y={9} width="11" height="10" viewBox="0 0 11 10"><path d="M.5 9.500v-4l5-5 5 5v4z" fill="#fff" stroke="#777" /></Marker>
                  </Ruler>
                </RulerRow>
                <Scroll>
                  <Sheets style={{ zoom: zoom / 100 }}>
                    <Sheet $tail>
                      <LastLine>述、可能的伤害程度、发生频率、现有控制措施等信息。<Mark /></LastLine>
                      <PageFooter n={50} />
                    </Sheet>
                    <Sheet $tail>
                      <LastLine />
                      <PageFooter n={51} />
                    </Sheet>
                    <Sheet>
                      <PageHeader />
                      <Flow>
                        <Title3>5. 2. 5. 3. 8  HSE 作业计划书<Mark /></Title3>
                        {leftPage.map((t) => <Paragraph key={t} text={t} />)}
                      </Flow>
                    </Sheet>
                    <Sheet>
                      <PageHeader />
                      <Flow $up>
                        {rightPage.map((t) => <Paragraph key={t} text={t} />)}
                      </Flow>
                    </Sheet>
                  </Sheets>
                </Scroll>
              </Work>
              <Float aria-label="助手">
                <svg width="32" height="32" viewBox="0 0 32 32"><circle cx="16" cy="16" r="15.500" fill="#7fd39b" /><path d="M22 3c-7 1-9 6-7 11 2 5 1 9-6 15 9-1 14-6 12-13-1-5-1-8 1-13z" fill="#eef7f0" /></svg>
              </Float>
            </Body>

            <Status>
              <span>第 32 页，共 451 页</span>
              <span>61238 个字</span>
              <Book x />
              <span>简体中文(中国大陆)</span>
              <span>修订: 关闭</span>
              <Access>
                <svg width="17" height="15" viewBox="0 0 17 15" fill="none" stroke="#444" strokeWidth="1.300"><path d="M7 1.500C3 2 1 5 1 7.500s2 5 5 5.500M11 1c2 .5 3.500 2 4 4" strokeDasharray="4 1.500" /><path d="M7 6l8 8M15 7l-7 7M8 3v4" /></svg>
                辅助功能: 调查
              </Access>
              <Views>
                <View aria-label="阅读视图"><Book /></View>
                <View $on aria-label="页面视图"><PageIcon /></View>
                <View aria-label="Web 版式视图"><PageIcon web /></View>
              </Views>
              <ZoomBox>
                <Step aria-label="缩小" onClick={() => setZoom(Math.max(10, zoom - 10))}>−</Step>
                <Track type="range" min={10} max={190} value={zoom} aria-label="缩放" onChange={(e) => setZoom(Number(e.target.value))} />
                <Step aria-label="放大" onClick={() => setZoom(Math.min(190, zoom + 10))}>+</Step>
                <span>{zoom}%</span>
              </ZoomBox>
            </Status>
          </Win>
        </Desktop>
        <Taskbar><TaskItem /></Taskbar>
      </Shell>
    </>
  );
}
